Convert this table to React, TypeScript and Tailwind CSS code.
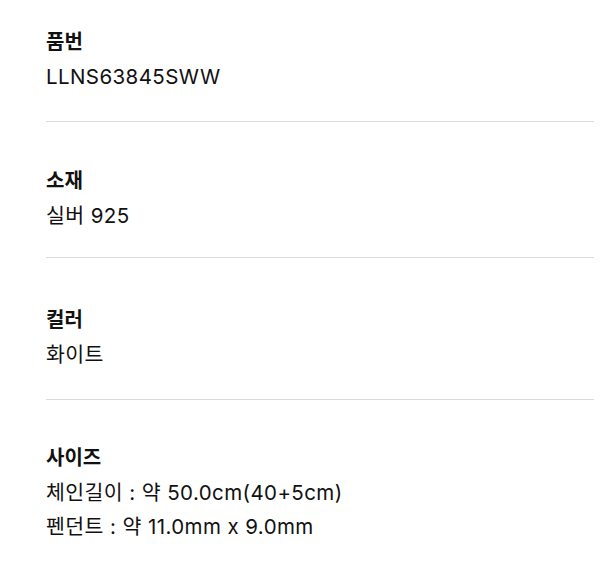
const specs = [
  { label: "품번", lines: ["LLNS63845SWW"], pad: "pt-[28px] pb-[27px] border-b" },
  { label: "소재", lines: ["실버 925"], pad: "pt-[45px] pb-[24px] border-b" },
  { label: "컬러", lines: ["화이트"], pad: "pt-[48px] pb-[27px] border-b" },
  {
    label: "사이즈",
    lines: ["체인길이 : 약 50.0cm(40+5cm)", "펜던트 : 약 11.0mm x 9.0mm"],
    pad: "pt-[44px]",
  },
];

export default function App() {
  return (
    <div
      className="w-[611px] h-[587px] bg-white pl-[46px] pr-[17px] text-[#111111]"
      style={{ fontFamily: '"Inter", "Noto Sans CJK KR", sans-serif' }}
    >
      {specs.map((s) => (
        <div key={s.label} className={`${s.pad} border-[#dadada]`}>
          <h3 className="text-[20px] leading-[28px] font-bold">{s.label}</h3>
          <div className="mt-1">
            {s.lines.map((l) => (
              <p key={l} className="text-[20.5px] leading-[34px] tracking-[0.02em]">
                {l}
              </p>
            ))}
          </div>
        </div>
      ))}
    </div>
  );
}
